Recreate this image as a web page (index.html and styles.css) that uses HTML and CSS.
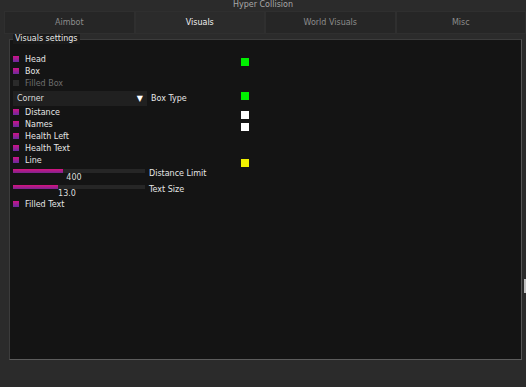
FILE: index.html
```html
<!DOCTYPE html>
<html lang="en">
<head>
    <meta charset="UTF-8">
    <title>Hyper Collision</title>
    <link rel="stylesheet" href="styles.css">
</head>
<body>
    <div class="title">Hyper Collision</div>

    <div class="tabs">
        <div class="tab">Aimbot</div>
        <div class="tab active">Visuals</div>
        <div class="tab">World Visuals</div>
        <div class="tab">Misc</div>
    </div>

    <div class="panel">
        <span class="legend">Visuals settings</span>

        <div class="row">
            <label class="check"><span class="box on"></span>Head</label>
            <span class="swatch green"></span>
        </div>
        <div class="row">
            <label class="check"><span class="box on"></span>Box</label>
        </div>
        <div class="row disabled">
            <label class="check"><span class="box"></span>Filled Box</label>
        </div>

        <div class="row combo-row">
            <div class="combo"><span>Corner</span><span class="arrow">&#9660;</span></div>
            <span class="side">Box Type</span>
            <span class="swatch green"></span>
        </div>

        <div class="row">
            <label class="check"><span class="box on"></span>Distance</label>
            <span class="swatch white"></span>
        </div>
        <div class="row">
            <label class="check"><span class="box on"></span>Names</label>
            <span class="swatch white"></span>
        </div>
        <div class="row">
            <label class="check"><span class="box on"></span>Health Left</label>
        </div>
        <div class="row">
            <label class="check"><span class="box on"></span>Health Text</label>
        </div>
        <div class="row">
            <label class="check"><span class="box on"></span>Line</label>
            <span class="swatch yellow"></span>
        </div>

        <div class="slider-row first">
            <div class="slider">
                <div class="track"><div class="fill" style="width: 50px"></div></div>
                <div class="value" style="margin-left: 49px">400</div>
            </div>
            <span class="side">Distance Limit</span>
        </div>
        <div class="slider-row last">
            <div class="slider">
                <div class="track"><div class="fill" style="width: 45px"></div></div>
                <div class="value" style="margin-left: 42px">13.0</div>
            </div>
            <span class="side">Text Size</span>
        </div>

        <div class="row">
            <label class="check"><span class="box on"></span>Filled Text</label>
        </div>
    </div>

    <div class="nub"></div>
</body>
</html>
```
FILE: styles.css
```css
body {
    margin: 0;
    height: 387px;
    overflow: hidden;
    background: #2b2b2b;
    font-family: "DejaVu Sans", Verdana, sans-serif;
    font-size: 8px;
    color: #e6e6e6;
    position: relative;
}
.title {
    height: 9px;
    line-height: 9px;
    text-align: center;
    color: #a8a8a8;
}
.tabs {
    display: flex;
    margin: 2px 0 0 4px;
    height: 23px;
}
.tab {
    flex: 1;
    display: flex;
    align-items: center;
    justify-content: center;
    background: #262626;
    border: 1px solid #2f2f2f;
    color: #8c8c8c;
}
.tab.active {
    background: #2b2b2b;
    color: #f0f0f0;
}
.panel {
    position: relative;
    margin: 5px 4px 0 9px;
    height: 306px;
    padding: 13px 0 0 3px;
    background: #141414;
    border: 1px solid #3c3c3c;
    border-right-color: #555;
    border-bottom-color: #5c5c5c;
}
.legend {
    position: absolute;
    top: -6px;
    left: 3px;
    padding: 0 2px;
    background: #1a1a1a;
    line-height: 10px;
    color: #e8e8e8;
}
.row {
    display: flex;
    height: 12px;
    align-items: center;
}
.check {
    display: flex;
    align-items: center;
    width: 228px;
}
.box {
    width: 6px;
    height: 6px;
    margin-right: 6px;
    background: #2a2a2a;
}
.box.on {
    background: linear-gradient(#cf1388, #6a2b9e);
}
.disabled {
    color: #6e6e6e;
}
.swatch {
    align-self: flex-end;
    width: 8px;
    height: 8px;
    margin-bottom: -1px;
}
.green { background: #00f000; }
.white { background: #ffffff; }
.yellow { background: #f0f000; }
.combo-row {
    height: 15px;
    margin-top: 2px;
    align-items: flex-start;
}
.combo {
    box-sizing: border-box;
    width: 134px;
    height: 15px;
    padding: 0 4px;
    display: flex;
    align-items: center;
    justify-content: space-between;
    background: #202020;
    color: #dcdcdc;
}
.arrow {
    font-size: 8px;
    color: #fff;
}
.side {
    width: 90px;
    margin-left: 4px;
    line-height: 15px;
}
.combo-row .swatch {
    align-self: flex-start;
    margin-top: 1px;
}
.slider-row {
    display: flex;
    align-items: flex-start;
}
.slider-row.first {
    margin-top: 3px;
}
.slider {
    width: 132px;
}
.track {
    height: 4px;
    background: #262626;
}
.fill {
    height: 4px;
    background: linear-gradient(#d8147f, #7a2490);
}
.value {
    width: 24px;
    text-align: center;
    line-height: 10px;
    height: 12px;
    color: #dcdcdc;
}
.slider-row.last .value {
    height: 9px;
}
.slider-row .side {
    margin-left: 4px;
    line-height: 9px;
    margin-top: 0;
}
.nub {
    position: absolute;
    right: 0;
    top: 279px;
    width: 2px;
    height: 14px;
    background: #bdbdbd;
}
```
